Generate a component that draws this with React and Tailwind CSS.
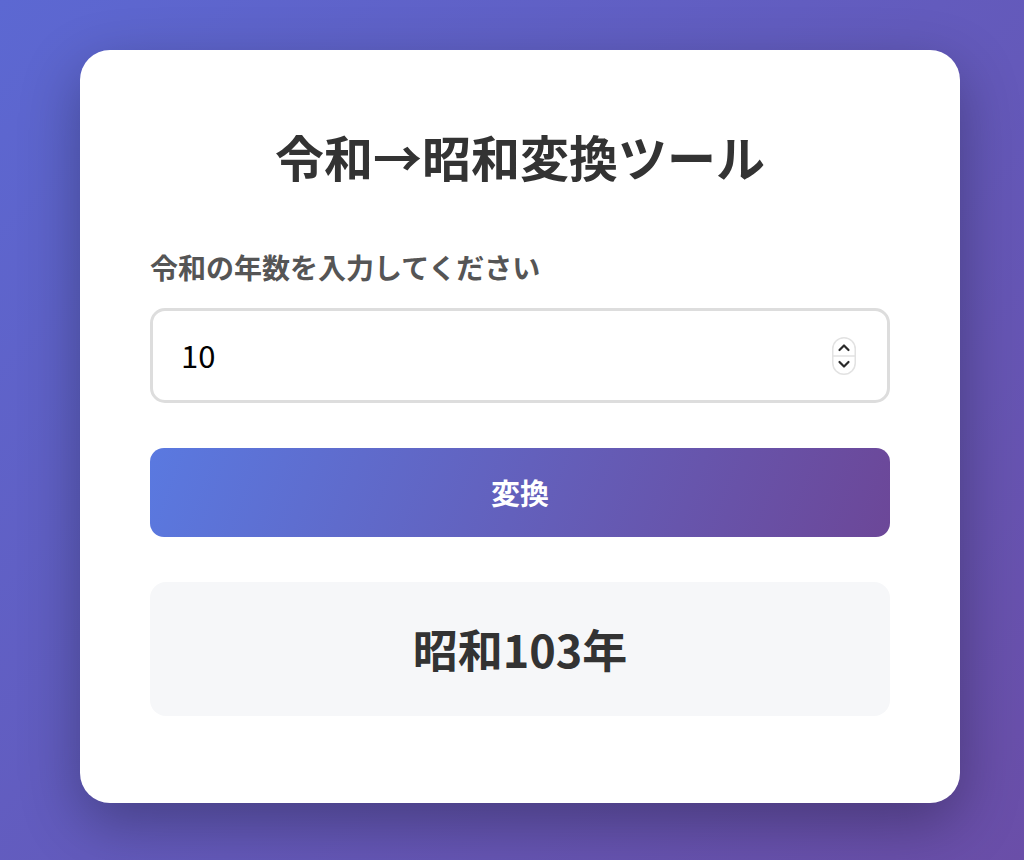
import React from "react";

function Stepper() {
  return (
    <svg width="24" height="38" viewBox="0 0 24 38" className="shrink-0">
      <rect x="0.75" y="0.75" width="22.5" height="36.5" rx="11.25" fill="#ffffff" stroke="#e2e2e2" strokeWidth="1.5" />
      <line x1="1" y1="19" x2="23" y2="19" stroke="#e2e2e2" strokeWidth="1.5" />
      <path d="M7.5 13 L12 8.5 L16.5 13" fill="none" stroke="#2a2a2a" strokeWidth="2.2" strokeLinecap="round" strokeLinejoin="round" />
      <path d="M7.5 25 L12 29.5 L16.5 25" fill="none" stroke="#2a2a2a" strokeWidth="2.2" strokeLinecap="round" strokeLinejoin="round" />
    </svg>
  );
}

export default function App() {
  const font = { fontFamily: '"Noto Sans CJK JP", "Noto Sans", sans-serif' };
  return (
    <div
      className="min-h-[860px] w-full flex items-start justify-center pt-[50px] pl-[16px] bg-[linear-gradient(135deg,#5c68d2_0%,#6a4ea8_100%)]"
      style={font}
    >
      <div className="w-[880px] bg-white rounded-[30px] shadow-[0_20px_60px_rgba(0,0,0,0.3)] px-[70px] pt-[70px] pb-[87px] flex flex-col">
        <h1 className="h-[80px] leading-[72px] text-center text-[49px] font-bold text-[#333333]">
          令和→昭和変換ツール
        </h1>
        <label className="mt-[50px] h-[36px] leading-[34px] text-[28px] font-bold text-[#555555]">
          令和の年数を入力してください
        </label>
        <div className="mt-[22px] h-[95px] border-[3px] border-[#dddddd] rounded-[15px] flex items-center pl-[28px] pr-[31px] bg-white">
          <input
            type="text"
            defaultValue="10"
            className="flex-1 min-w-0 outline-none bg-transparent text-[31px] text-black"
            style={font}
          />
          <Stepper />
        </div>
        <button className="mt-[45px] h-[89px] rounded-[14px] bg-[linear-gradient(110deg,#5a79e0_0%,#6c4798_100%)] text-white text-[29px] font-bold flex items-center justify-center">
          変換
        </button>
        <div className="mt-[45px] h-[134px] rounded-[16px] bg-[#f6f7f9] flex items-center justify-center">
          <span className="text-[45px] font-bold text-[#333333]">昭和103年</span>
        </div>
      </div>
    </div>
  );
}
